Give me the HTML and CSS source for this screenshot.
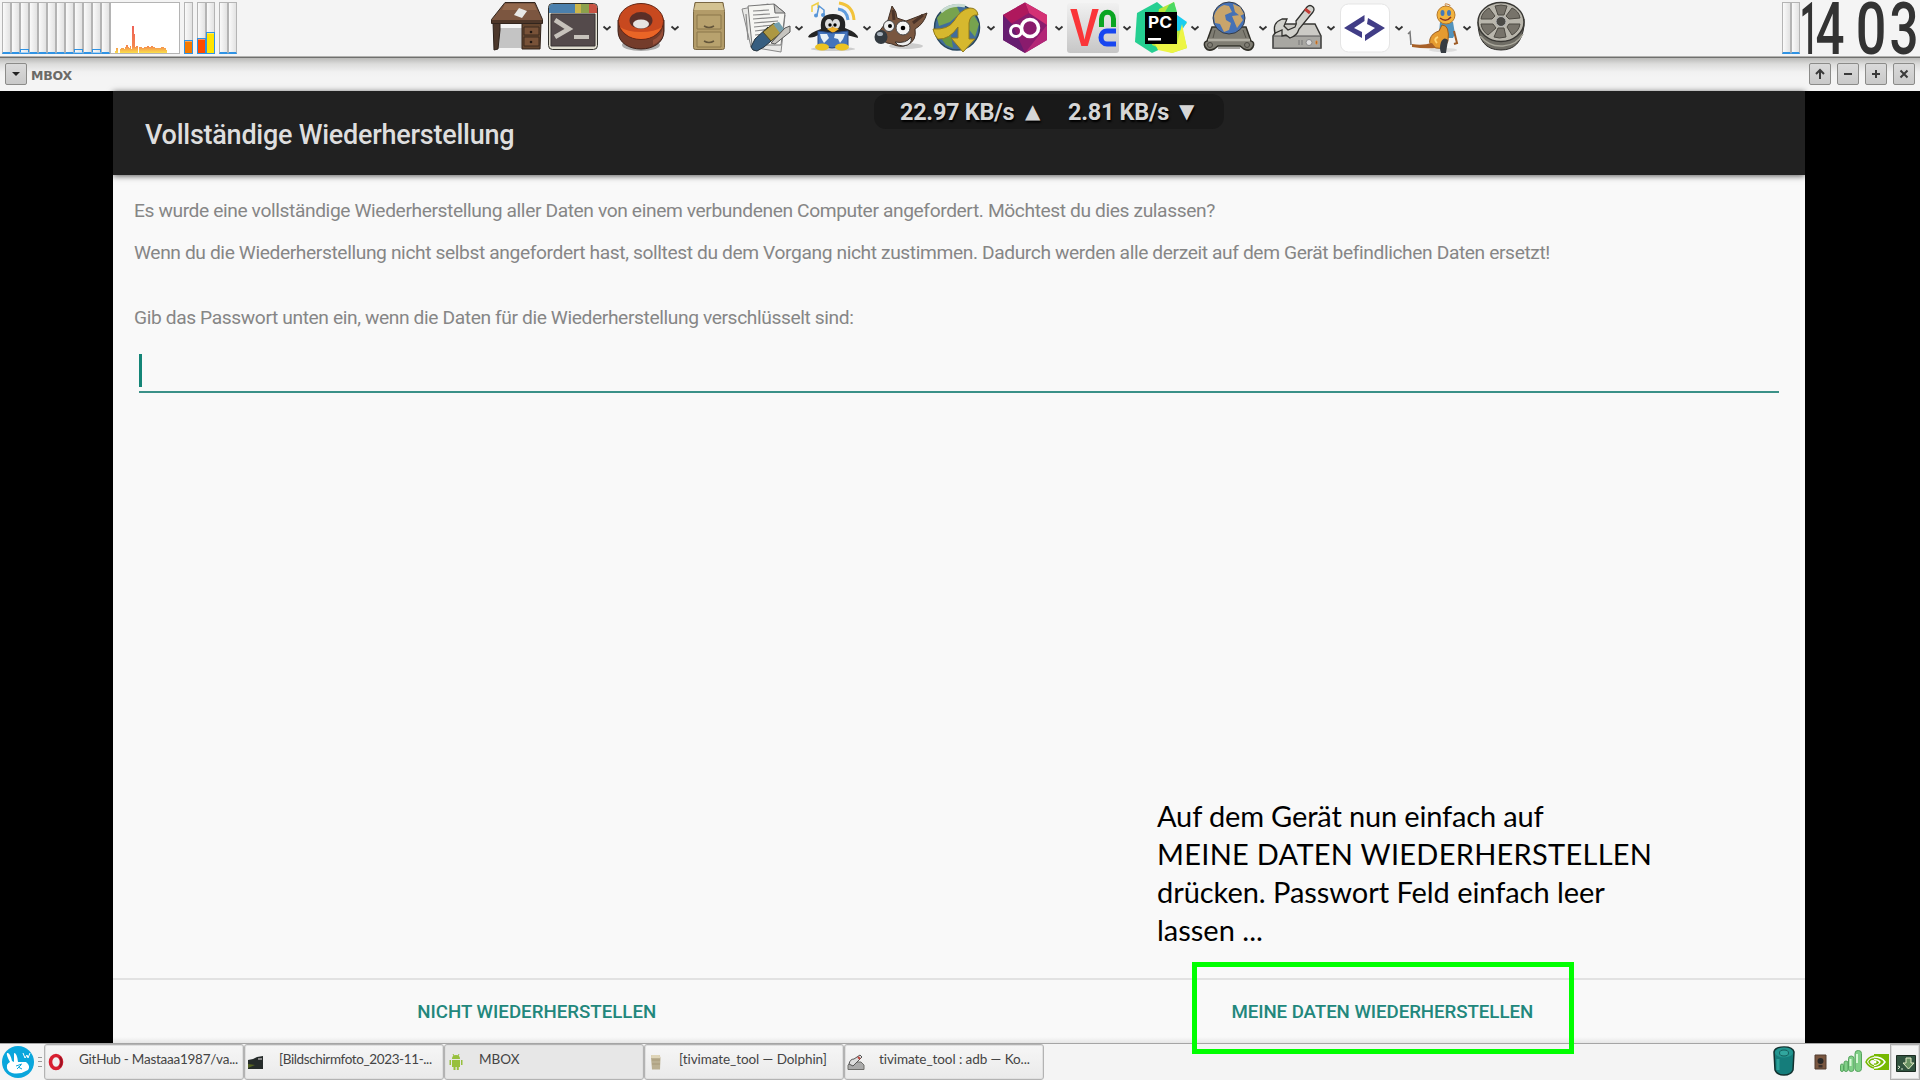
FILE: index.html
```html
<!DOCTYPE html>
<html lang="de">
<head>
<meta charset="utf-8">
<title>MBOX</title>
<link rel="stylesheet" href="styles.css">
</head>
<body>
<header class="panel">
  <div class="monitors">
    <div class="meters">
      <i class="meter"></i><i class="meter"></i><i class="meter bump"></i><i class="meter"></i><i class="meter"></i><i class="meter"></i><i class="meter"></i><i class="meter"></i><i class="meter bump"></i><i class="meter"></i><i class="meter bump"></i><i class="meter"></i>
      <svg class="graph" viewBox="0 0 70 52" width="70" height="52">
        <defs><linearGradient id="flame" x1="0" y1="24" x2="0" y2="51" gradientUnits="userSpaceOnUse"><stop offset="0" stop-color="#ee6258"/><stop offset=".75" stop-color="#f4854e"/><stop offset="1" stop-color="#fbe04a"/></linearGradient></defs>
        <rect x=".5" y=".5" width="69" height="51" fill="#fff" stroke="#b4b4b4"/>
        <path fill="url(#flame)" d="M5 51v-2h1v-3h2v5zM10 51v-4h1v-1h3v1h1v-2h1v-2h2v2h1v1h1v-2h1v3h1V24h2v8h1v13h1v-1h2v7h1v-6h3v1h2v-1h3v-1h2v1h2v-1h2v1h2v1h6v-1h3v1h2v2h1v3z"/>
      </svg>
    </div>
    <div class="meters"><i class="meter level orange"></i></div>
    <div class="meters"><i class="meter level red"></i><i class="meter level yellow"></i></div>
    <div class="meters"><i class="meter"></i><i class="meter"></i></div>
  </div>

  <nav class="launchers">
    <div class="launcher"><svg class="icon" viewBox="0 0 52 56">
      <path d="M7 28h26v20H7z" fill="#c4c4c4"/><path d="M2 22h7v8l-2 19-4 1z" fill="#4c382c" stroke="#2c211a"/>
      <path d="M31 23h19l-1 26H31z" fill="#65462f" stroke="#30231b"/><path d="M33 27h15v8H33zM33 37h15v9H33z" fill="#785238" stroke="#3d2a1e"/>
      <path d="M14 2.500h30l7.500 17v4H.5v-4z" fill="#7c5640" stroke="#32251d"/><path d="M1 20h50v3H1z" fill="#4e3729"/><path d="M14 4h29l3 6H11z" fill="#92674b"/>
      <path d="M23 15l5-7 8 3-5 7z" fill="#e8e8e6"/><circle cx="40" cy="32" r="1.300" fill="#221813"/><circle cx="40" cy="42" r="1.300" fill="#221813"/></svg></div>
    <div class="launcher"><svg class="icon" viewBox="0 0 52 56">
      <rect x="1.500" y="3.500" width="49" height="46" rx="4" fill="#e1ded0" stroke="#30302c"/>
      <path d="M2 13V8q0-4 4-4h22v9z" fill="#4b80ad"/><path d="M28 4h6v9h-6z" fill="#ccb64a"/><path d="M34 4h8v9h-8z" fill="#8ca14d"/><path d="M42 4h4q4 0 4 4v5h-8z" fill="#c75343"/>
      <path d="M4 14h44v32H4z" fill="#544a4b" stroke="#393334"/><path d="M8 20l14 9-14 8" fill="none" stroke="#c7c2bb" stroke-width="4.500"/><path d="M27 37h15" stroke="#c7c2bb" stroke-width="4"/></svg>
      <svg class="chev" viewBox="0 0 12 56"><path d="M2.500 26.500l3.500 3 3.500-3"/></svg></div>
    <div class="launcher"><svg class="icon" viewBox="0 0 52 56">
      <ellipse cx="26" cy="45" rx="19" ry="6" fill="#aaa"/><path d="M3 20v11c0 24 46 24 46 0V20z" fill="#743c2b" stroke="#40221b"/><path d="M38 40q9-4 10-13v8q-2 6-10 10z" fill="#964e38"/>
      <ellipse cx="26" cy="21.500" rx="22.500" ry="18" fill="#c8491f" stroke="#632716"/>
      <path d="M5 27q7 12 21 12t21-12q-7 5-21 5T5 27z" fill="#ea6526"/><ellipse cx="26" cy="20.500" rx="11.500" ry="8.500" fill="#5b2e27"/><ellipse cx="26" cy="24" rx="8" ry="4.500" fill="#e6e3e2"/></svg>
      <svg class="chev" viewBox="0 0 12 56"><path d="M2.500 26.500l3.500 3 3.500-3"/></svg></div>
    <div class="launcher"><svg class="icon" viewBox="0 0 52 56">
      <path d="M12 2.500h28l1.500 9v36q0 2-2 2h-27q-2 0-2-2v-36z" fill="#b39c69" stroke="#796744"/><path d="M13 3h26l2 7H11z" fill="#d3c292"/><path d="M14 15h24v14H14zM14 32h24v15H14z" fill="#b8a26e" stroke="#8a764b"/>
      <path d="M21 26q5 3 10 0M21 41q5 3 10 0" fill="none" stroke="#64563b" stroke-width="1.500"/></svg></div>
    <div class="launcher"><svg class="icon" viewBox="0 0 52 56">
      <path d="M3 9l26-5 17 11-4 37-30-5z" fill="#e7e7e5" stroke="#888"/><path d="M9 6l26-2 11 9-4 32H13z" fill="#f5f5f2" stroke="#777"/><path d="M35 4l1 9h10z" fill="#c7c7c5" stroke="#666"/>
      <path d="M14 11l16-1M14 15l17-1M14 19l26-2M15 23l24-2M15 27l20-2M16 31l16-2M16 35l10-1M7 14l2 26" stroke="#888" stroke-width="1.200"/>
      <path d="M14 50l-2-3 4-8 13-12 9 9-13 11-7 4z" fill="#375e80" stroke="#23313b"/><path d="M24 32l11-9 8 9-11 9z" fill="#ad9843" stroke="#50471f"/><path d="M34 24l6-2 5 7-4 4z" fill="#739eac"/><path d="M32 43l14-15 5-2v6L36 44z" fill="#c7c5c0" stroke="#555"/></svg>
      <svg class="chev" viewBox="0 0 12 56"><path d="M2.500 26.500l3.500 3 3.500-3"/></svg></div>
    <div class="launcher"><svg class="icon" viewBox="0 0 52 56">
      <path d="M5 12V6l6-3v5" fill="none" stroke="#f0cf43" stroke-width="1.500"/><path d="M10 15l2-9 5 4v5" fill="none" stroke="#5795d8" stroke-width="1.500"/><circle cx="9" cy="15.500" r="2" fill="#5795d8"/><circle cx="16" cy="15" r="2" fill="#5795d8"/>
      <path d="M32 3q14 2 15 17" fill="none" stroke="#f2c33b" stroke-width="3"/><path d="M31 9q9 1 10 11" fill="none" stroke="#609ddd" stroke-width="3"/>
      <ellipse cx="26" cy="49" rx="22" ry="2" fill="#ccc"/><path d="M14 29q-2-15 12-15t12 14q13 5 13 10-7-2-12-3l-3 13H14l-1-14q-8 5-12 3 1-4 13-8z" fill="#242424"/>
      <ellipse cx="22" cy="24" rx="4" ry="5" fill="#ddd"/><ellipse cx="29" cy="24" rx="4" ry="5" fill="#ddd"/><circle cx="23" cy="25" r="1.700"/><circle cx="28" cy="25" r="1.700"/><path d="M20 29l6-2 6 2-6 4z" fill="#edad27"/>
      <path d="M11 31l14 2 16-2v15l-16 2-14-2z" fill="#4474bc" stroke="#284a85"/><path d="M13 34l7 0 2 4-5 5-3-5zM28 34h10l-2 5-3 4-2-4-4-1z" fill="#e9f0f5"/><ellipse cx="15" cy="47" rx="7" ry="3.500" fill="#ecc322"/><ellipse cx="35" cy="47" rx="7" ry="3.500" fill="#ecc322"/></svg>
      <svg class="chev" viewBox="0 0 12 56"><path d="M2.500 26.500l3.500 3 3.500-3"/></svg></div>
    <div class="launcher"><svg class="icon" viewBox="0 0 52 56">
      <ellipse cx="31" cy="46" rx="17" ry="3" fill="#ccc"/><path d="M13 20l4-14q5 6 5 12l9 3 21-8q-3 11-12 16 2 12-8 16-7 3-15-1-11-1-14-11z" fill="#79563f" stroke="#413026"/><path d="M18 10l1 10M48 15l-10 8" stroke="#4b3429" stroke-width="3"/>
      <circle cx="14" cy="26" r="5.500" fill="#eee" stroke="#444"/><circle cx="28" cy="28" r="7" fill="#f4f4f4" stroke="#444"/><circle cx="15" cy="26" r="2"/><circle cx="28" cy="28" r="2.300"/>
      <ellipse cx="6" cy="37" rx="6.500" ry="7" fill="#333a40"/><ellipse cx="5" cy="34" rx="3" ry="2" fill="#a8b2bc"/><path d="M20 42q11 2 16-5 2 8-8 9-6 0-8-4z" fill="#eee" stroke="#38302b"/></svg></div>
    <div class="launcher"><svg class="icon" viewBox="0 0 52 56">
      <circle cx="26" cy="27.500" r="22.500" fill="#416d9b" stroke="#27465d" stroke-width="1.500"/><path d="M6 18l8-10 11-3 4 8-10 9-11 4zM33 9l7 1 8 14-4 13-8-10z" fill="#77a34e"/><path d="M10 38l10-3 2 13-7-3z" fill="#68963f"/><path d="M10 12q10-9 24-6" fill="none" stroke="#c7dbd1" stroke-width="3"/>
      <path d="M2 29q15 1 21-8 7-12 16-13 7 0 8 7-8-1-9 8v16h6L32 52 20 38h7V27q-9 13-20 12-4-4-5-10z" fill="#d6b82e" stroke="#927b1c"/></svg>
      <svg class="chev" viewBox="0 0 12 56"><path d="M2.500 26.500l3.500 3 3.500-3"/></svg></div>
    <div class="launcher"><svg class="icon" viewBox="0 0 52 56">
      <path d="M26 2.500l22 12.500v25L26 53 4 40V15z" fill="#8a1b6d"/><path d="M26 2.500l22 12.500v10L30 13z" fill="#d43174"/><path d="M4 15L26 2.500 30 13 10 25z" fill="#af185d"/><path d="M4 15l9 9 13 29L4 40z" fill="#671d70"/><path d="M48 25L26 53l22-13z" fill="#b32677"/>
      <circle cx="17" cy="31" r="5.500" fill="none" stroke="#fff" stroke-width="3"/><circle cx="31" cy="28" r="8.500" fill="none" stroke="#fff" stroke-width="3.500"/></svg>
      <svg class="chev" viewBox="0 0 12 56"><path d="M2.500 26.500l3.500 3 3.500-3"/></svg></div>
    <div class="launcher"><svg class="icon" viewBox="0 0 52 56">
      <defs><linearGradient id="vnc" x2="0" y2="1"><stop stop-color="#f1f1f1"/><stop offset="1" stop-color="#c6c6c6"/></linearGradient></defs><rect y="3" width="52" height="50" rx="3" fill="url(#vnc)"/>
      <text x="3" y="46" font-family="Liberation Sans" font-weight="bold" font-size="53" fill="#fa3538" textLength="29" lengthAdjust="spacingAndGlyphs">V</text>
      <path d="M34.500 27V19c0-9 12-9 12 0v8" fill="none" stroke="#0aa522" stroke-width="5"/><path d="M49 31h-9c-8 0-8 13 0 13h9" fill="none" stroke="#1746f0" stroke-width="5"/></svg>
      <svg class="chev" viewBox="0 0 12 56"><path d="M2.500 26.500l3.500 3 3.500-3"/></svg></div>
    <div class="launcher"><svg class="icon" viewBox="0 0 52 56">
      <path d="M2 13L22 2l12 10v33L17 53 0 42z" fill="#25cf91"/><path d="M24 9l15-7 3 14 10 7-5 5 5 20-15 5-20-8z" fill="#b8e83c"/><path d="M42 15l10 7-5 8-5 1z" fill="#19cdf1"/><path d="M20 44h22l5-20 5 24-15 5-14-3z" fill="#edf544"/><path d="M34 5l5-3 3 10H30z" fill="#4bd963"/>
      <path d="M10 12h32v32H10z"/><text x="13" y="28" font-family="Inter" font-weight="bold" font-size="16" fill="#fff" textLength="24" lengthAdjust="spacingAndGlyphs">PC</text><path d="M13 38h13v2.500H13z" fill="#fff"/></svg>
      <svg class="chev" viewBox="0 0 12 56"><path d="M2.500 26.500l3.500 3 3.500-3"/></svg></div>
    <div class="launcher"><svg class="icon" viewBox="0 0 52 56">
      <path d="M9 27h34l5 14q4 1 2 6-3 5-9 2l-4-3H15l-4 3q-6 3-9-2-2-5 2-6z" fill="#7f7d73" stroke="#313029" stroke-width="1.500"/><path d="M5 40h42" stroke="#aeaca1" stroke-width="2.500"/><circle cx="7" cy="45" r="2.500" fill="none" stroke="#4b4943"/><circle cx="44" cy="45" r="2.500" fill="none" stroke="#4b4943"/><path d="M12 30l-2 8M40 30l3 8M15 48h22" stroke="#55534a"/>
      <circle cx="26" cy="18" r="16" fill="#4571b5" stroke="#343b47"/><path d="M11 16q2-8 10-11l5 1 3 6-7 3 1 5 5 3-2 7-5 2-4-8-5-1zM30 4l7 3 4 7-4 2-5-4zM29 16l8-1 3 5-6 8z" fill="#c9a56b"/></svg>
      <svg class="chev" viewBox="0 0 12 56"><path d="M2.500 26.500l3.500 3 3.500-3"/></svg></div>
    <div class="launcher"><svg class="icon" viewBox="0 0 52 56">
      <path d="M10 24h34l6 12v12H2V36z" fill="#cbcac5" stroke="#383835" stroke-width="1.500"/><path d="M2.500 36h47v12h-47z" fill="#a8a7a2" stroke="#555"/><path d="M28 40v5M31 40v5" stroke="#777"/><circle cx="38" cy="42.500" r="3" fill="#ddd" stroke="#888"/><path d="M45 41h1v3h-1z" stroke="#e38633"/>
      <path d="M4 33q-3-10 7-14l5 0-3 7 4 4 7-3q2-3 1-6L36 7q3-3 6 0 2 2 0 5L28 29q-2 7-9 9l-4-3-4 1 0-6z" fill="#d1d1cc" stroke="#31312e" stroke-width="1.300"/><path d="M34 9l5 4" stroke="#c33c35" stroke-width="3"/></svg>
      <svg class="chev" viewBox="0 0 12 56"><path d="M2.500 26.500l3.500 3 3.500-3"/></svg></div>
    <div class="launcher"><svg class="icon" viewBox="0 0 52 56">
      <rect x="1.500" y="4" width="49" height="48" rx="8" fill="#fff" stroke="#e5e5e5"/><path d="M25.500 15L5 28l18 10v-6l-8-4 10.500-7zM29 18l17 10-20 13v-6l10-7-8-4z" fill="#413d86"/></svg>
      <svg class="chev" viewBox="0 0 12 56"><path d="M2.500 26.500l3.500 3 3.500-3"/></svg></div>
    <div class="launcher"><svg class="icon" viewBox="0 0 52 56">
      <ellipse cx="36" cy="50" rx="14" ry="2" fill="#ddd"/><path d="M40 7q-4-4 0-3t3 2" fill="none" stroke="#c98338"/><path d="M33 22h13l2 12-2 4h-5l-3-5h-6z" fill="#5293bd"/><path d="M35 25q8 0 6 16-3 9-12 7-8-2-6-9 2-6 9-8z" fill="#e69b30" stroke="#9a5c1d"/><path d="M25 43q-10 3-20 1v3q12 2 24 1z" fill="#a86128"/><path d="M47 31l3 12-3 1" fill="none" stroke="#9e5b25" stroke-width="2"/><path d="M1 34l2-2 1 13" fill="none" stroke="#777" stroke-width="1.500"/>
      <circle cx="39" cy="15" r="9" fill="#f2b33d" stroke="#b6782b"/><ellipse cx="35.500" cy="13" rx="2" ry="3" fill="#4479b9"/><ellipse cx="42" cy="13" rx="2" ry="3" fill="#4479b9"/><path d="M33 18q6 5 11-1" fill="none" stroke="#8c3423" stroke-width="1.500"/><path d="M31 37q-5 2-1 6" fill="none" stroke="#ffd473" stroke-width="2"/><path d="M34 42q3-6 7-2l-2 13h-5q-2-5 0-11z" fill="#363b41"/></svg>
      <svg class="chev" viewBox="0 0 12 56"><path d="M2.500 26.500l3.500 3 3.500-3"/></svg></div>
    <div class="launcher"><svg class="icon" viewBox="0 0 52 56">
      <path d="M3 22q0 28 23 28 20 0 23-24v-7z" fill="#6f6d65" stroke="#31302d"/><path d="M5 36q9 11 23 10t20-12" fill="none" stroke="#aaa89c" stroke-width="1.500"/>
      <ellipse cx="26" cy="22" rx="23" ry="19.500" fill="#b9b6ac" stroke="#393834" stroke-width="1.500"/><g fill="#77736a" stroke="#4d4a43"><path d="M20 6q6-2 12 0l-3 9h-6zM37 8q7 3 8 10l-11 1-3-3zM45 24q-1 7-8 11l-5-8 2-3zM31 37q-7 2-12 0l4-9h6zM13 35q-6-4-7-11l12 0 3 4zM6 19q1-7 8-11l6 8-3 3z"/></g><circle cx="26" cy="21.500" r="5" fill="#4b4a46" stroke="#bbb"/></svg></div>
  </nav>

  <div class="clock">
    <div class="meters"><i class="meter"></i><i class="meter"></i></div>
    <svg class="digits" viewBox="0 0 118 56" width="118" height="56"><g font-family="Roboto" font-weight="500" font-size="73" fill="#333" text-anchor="middle"><text transform="translate(7 54) scale(.45 1)">1</text><text transform="translate(28 54) scale(.7 1)">4</text><text transform="translate(69 54) scale(.74 1)">0</text><text transform="translate(102 54) scale(.7 1)">3</text></g></svg>
  </div>
</header>

<div class="titlebar">
  <span class="winbtn"><svg viewBox="0 0 22 22"><path d="M7 9h8l-4 4z" fill="#222"/></svg></span>
  <span class="wintitle">MBOX</span>
  <span class="winbtn"><svg viewBox="0 0 22 22"><path d="M11 16V8M7 11l4-4 4 4"/></svg></span>
  <span class="winbtn"><svg viewBox="0 0 22 22"><path d="M7 11h8"/></svg></span>
  <span class="winbtn"><svg viewBox="0 0 22 22"><path d="M7 11h8M11 7v8"/></svg></span>
  <span class="winbtn"><svg viewBox="0 0 22 22"><path d="M7.500 7.500l7 7M14.500 7.500l-7 7"/></svg></span>
</div>

<main class="stage">
  <section class="screen">
    <div class="appbar">
      <h1>Vollständige Wiederherstellung</h1>
      <div class="speed"><span class="up">22.97 KB/s</span><b>▲</b><span class="down">2.81 KB/s</span><b>▼</b></div>
    </div>
    <div class="body">
      <p class="p1">Es wurde eine vollständige Wiederherstellung aller Daten von einem verbundenen Computer angefordert. Möchtest du dies zulassen?</p>
      <p class="p2">Wenn du die Wiederherstellung nicht selbst angefordert hast, solltest du dem Vorgang nicht zustimmen. Dadurch werden alle derzeit auf dem Gerät befindlichen Daten ersetzt!</p>
      <p class="p3">Gib das Passwort unten ein, wenn die Daten für die Wiederherstellung verschlüsselt sind:</p>
      <div class="field"><i class="caret"></i></div>
    </div>
    <div class="actions"><button class="deny">NICHT WIEDERHERSTELLEN</button><button class="allow">MEINE DATEN WIEDERHERSTELLEN</button></div>
  </section>
</main>

<footer class="taskbar">
  <svg class="start" viewBox="0 0 32 32" width="32" height="32"><circle cx="16" cy="16" r="16" fill="#0aa6dc"/><path d="M5 7q3-1 5 8l2 1V7q3 0 4 9l8 0q5 4 2 8-8 5-16 3-6-2-5-8 1-2 3-3-4-7-3-9z" fill="#fff"/><path d="M21 7l2 5 2-3 1 3 2-5" fill="none" stroke="#fff"/><path d="M14 20l6-2M15 23l4-4M16 21l4 2" stroke="#0aa6dc"/></svg>
  <span class="grip"></span>
  <div class="task"><svg viewBox="0 0 16 16"><ellipse cx="8" cy="8" rx="5.500" ry="6.500" fill="none" stroke="#d81f31" stroke-width="3.600"/><path d="M12 3q3 5 0 10" fill="none" stroke="#9c1222" stroke-width="2"/></svg><span class="t1">GitHub - Mastaaa1987/va...</span></div>
  <div class="task"><svg viewBox="0 0 16 16"><path d="M0 6l5-1 4-2 6-1v13H0z" fill="#252b2a"/><path d="M0 10l7 1-7 3z" fill="#546222"/><path d="M10 4h4v2h-4z" fill="#888"/></svg><span class="t2">[Bildschirmfoto_2023-11-...</span></div>
  <div class="task active"><svg viewBox="0 0 16 16"><path d="M4 6h8v7H4zM4 5q0-4 4-4t4 4zM1.500 6H3v5H1.500zM13 6h1.500v5H13zM5.500 13h2v3h-2zM8.800 13h2v3h-2z" fill="#97c03d"/><path d="M5 0l1 2M11 0l-1 2" stroke="#97c03d"/></svg><span class="t3">MBOX</span></div>
  <div class="task"><svg viewBox="0 0 16 16"><path d="M3.500 1h8l1 3-.5 11.500H4L3 4z" fill="#bbb092"/><path d="M3.500 1h8l1 3H3z" fill="#dfd5b8"/><path d="M4 6h8M4 10h8" stroke="#a79979"/></svg><span class="t4">[tivimate_tool — Dolphin]</span></div>
  <div class="task"><svg viewBox="0 0 16 16"><path d="M3 8h10l3 3v4.500H0V11z" fill="#aaa" stroke="#6e6e6b"/><path d="M1 10q1-5 5-5l6-4 2 2-6 6-3 3z" fill="#ddd" stroke="#555"/><path d="M10 3l2 2" stroke="#bd443d" stroke-width="2"/></svg><span class="t5">tivimate_tool : adb — Ko...</span></div>
  <div class="tray">
    <svg class="cyl" viewBox="0 0 22 30" width="22" height="30"><path d="M1 6q1-5 10-5t10 5l-1 18q-2 5-9 5t-9-5z" fill="#157d7b" stroke="#12312f" stroke-width="1.500"/><ellipse cx="11" cy="6.500" rx="9" ry="5" fill="#239690"/><ellipse cx="11" cy="7" rx="4.500" ry="3" fill="#31a69e" stroke="#145f5c"/><path d="M5 13v11" stroke="#2ba19a" stroke-width="3"/></svg>
    <svg class="spk" viewBox="0 0 11 16" width="11" height="16"><path d="M0 1h11v14H0z" fill="#795640" stroke="#523c30"/><circle cx="5.500" cy="7" r="3" fill="#292727"/><path d="M3.500 11h4v2.500h-4z" fill="#3b302c"/></svg>
    <svg class="sig" viewBox="0 0 22 22" width="22" height="22"><g fill="#80cf87" stroke="#55a45e"><rect x=".5" y="14" width="3" height="7.500" rx="1.500"/><rect x="4" y="11" width="4" height="10.500" rx="2"/><rect x="8.500" y="6" width="5.500" height="15.500" rx="2.700"/><rect x="15" y=".5" width="6.500" height="21" rx="3"/></g><path d="M17 4v9M10.500 9v7" stroke="#d8f6d6" stroke-width="2"/></svg>
    <svg class="nv" viewBox="0 0 24 16" width="24" height="16"><path d="M9 0h15v16H9z" fill="#76b900"/><path d="M9 3q8 0 11 5-4 6-11 6" fill="none" stroke="#fff" stroke-width="1.500"/><path d="M9 2Q3 3 1 8q3 5 8 6M9 5q-4 0-5 3 2 4 7 4 3-1 5-4-3-3-7-3" fill="none" stroke="#76b900" stroke-width="1.500"/><path d="M9 5.500q4 0 6 2.500-2 3.500-6 3.500" fill="none" stroke="#fff" stroke-width="1.300"/><circle cx="10" cy="8" r="1.500" fill="#fff"/></svg>
    <span class="dl"><svg viewBox="0 0 20 17" width="20" height="17"><path d="M.5.500h19v16H.5z" fill="#31533f" stroke="#1c2c22"/><path d="M10 3h5v5h3l-5.500 6L7 8h3z" fill="#689263" stroke="#e3ecc7"/><path d="M2 11l2 1-2 2M5 14h2" fill="none" stroke="#d8e7d1"/></svg></span>
  </div>
</footer>

<div class="note"><div class="n1">Auf dem Gerät nun einfach auf</div><div class="n2">MEINE DATEN WIEDERHERSTELLEN</div><div class="n3">drücken. Passwort Feld einfach leer</div><div class="n4">lassen ...</div></div>
<div class="highlight"></div>
</body>
</html>
```
FILE: styles.css
```css
* { box-sizing: border-box; }
body { margin: 0; width: 1920px; height: 1080px; overflow: hidden; display: flex; flex-direction: column; background: #f4f4f4; font-family: Roboto, sans-serif; position: relative; }
svg { overflow: visible; }

.panel { height: 58px; flex: none; display: flex; justify-content: space-between; border-bottom: 1px solid #6f6f6d; box-shadow: inset 0 -1px #b2b2b0; padding: 0 4px 0 2px; background: #f4f4f4; }
.monitors { display: flex; gap: 4px; padding-top: 2px; width: 489px; }
.meters { display: flex; height: 52px; }
.meter { display: block; width: 9px; height: 52px; border: 1px solid #b4b4b4; border-bottom: 2px solid #2f93e4; background: linear-gradient(90deg, #fafafa, #e2e2e2); position: relative; }
.bump::after { content: ""; position: absolute; left: -1px; right: -1px; bottom: -1px; height: 2px; border: 1px solid #2f93e4; border-bottom-color: #a8d2f5; }
.level { border-bottom: 1px solid #2f93e4; }
.level::after { content: ""; position: absolute; left: -1px; right: -1px; bottom: -1px; border: 1px solid #2f93e4; box-shadow: inset 0 1px rgba(255, 255, 255, .35); }
.orange::after { height: 12px; background: #f57900; }
.red::after { height: 14px; background: #ff4b00; }
.yellow::after { height: 20px; background: #ffe400; }
.graph { display: block; }

.launchers { display: flex; flex: none; }
.launcher { display: flex; padding-right: 4px; }
.icon { width: 52px; height: 56px; display: block; }
.chev { width: 12px; height: 56px; margin-left: 2px; margin-right: -2px; display: block; }
.chev path { fill: none; stroke: #333; stroke-width: 1.8; }
.clock { margin-left: auto; display: flex; gap: 2px; }
.clock .meters { margin-top: 2px; }
.digits { display: block; margin-right: -4px; }

.titlebar { height: 33px; flex: none; display: flex; align-items: center; padding: 0 5px; gap: 6px; background: linear-gradient(#b9b9b7, #dcdcdb 6px, #f1f1f1 14px, #f4f4f4 20px); }
.winbtn { width: 22px; height: 22px; margin-bottom: 1px; border: 1px solid #8b8b89; border-radius: 2px; background: linear-gradient(#dadada, #c9c9c9); }
.winbtn svg { display: block; margin: -1px; width: 22px; height: 22px; fill: none; stroke: #3a3a3a; stroke-width: 2; }
.winbtn:first-child svg { stroke: none; }
.wintitle { flex: 1; margin-left: -2px; font: bold 12.500px "DejaVu Sans", sans-serif; letter-spacing: -.2px; color: #6b6b67; padding-top: 1px; }

.stage { height: 952px; flex: none; background: #000; padding: 0 115px 0 113px; }
.screen { height: 952px; display: flex; flex-direction: column; background: linear-gradient(#f9f9f9 946px, #e6e6e6 952px); }
.appbar { height: 84px; flex: none; background: #212121; box-shadow: 0 1px 6px rgba(0, 0, 0, .65); position: relative; padding-left: 32px; }
h1 { margin: 0; font-weight: 500; font-size: 27px; line-height: 32px; letter-spacing: -.25px; padding-top: 28px; color: #dedede; white-space: nowrap; }
.speed { position: absolute; left: 761px; top: 3px; width: 350px; height: 35px; border-radius: 12px; background: #191919; display: flex; align-items: center; padding-left: 26px; font-weight: 700; font-size: 23.500px; letter-spacing: -.3px; color: #d6d6d6; white-space: nowrap; text-shadow: 1px 2px 2px #000; }
.speed b { font: 20px/24px "DejaVu Sans", sans-serif; width: 16px; margin-top: -2px; }
.up { width: 125px; }
.down { width: 111px; }
.speed b:nth-child(2) { margin-right: 27px; }
.body { flex: 1; padding: 22px 26px 0 21px; color: #868686; font-size: 19.200px; letter-spacing: -.385px; white-space: nowrap; }
p { margin: 0; line-height: 26px; }
.p1 { padding-top: 1px; }
.p2 { margin-top: 16px; }
.p3 { margin-top: 39px; }
.field { margin: 23px 0 0 5px; height: 39px; border-bottom: 2px solid #3b9188; }
.caret { display: block; width: 3px; height: 33px; background: #148577; }
.actions { height: 65px; flex: none; border-top: 2px solid #e2e2e2; display: flex; }
button { background: none; border: 0; padding: 0; margin: 1px 0 0; font: 500 18.700px/62px Roboto, sans-serif; color: #22877c; flex: 1; text-align: center; white-space: nowrap; }
.allow, .deny { height: 62px; }
.allow { letter-spacing: -.06px; }
.deny { padding-left: 1px; }

.taskbar { height: 37px; flex: none; display: flex; border-top: 1px solid #a5a5a5; padding-left: 2px; background: #f4f4f4; }
.start { margin-top: 2px; flex: none; }
.grip { width: 4px; height: 10px; margin: 13px 2px 0 4px; border-top: 1px solid #999; border-bottom: 1px solid #999; background: linear-gradient(transparent 3px, #999 3px, #999 4px, transparent 4px); flex: none; }
.task { width: 200px; flex: none; height: 36px; border: 1px solid #b3b3b3; border-radius: 3px; display: flex; align-items: flex-start; padding: 9px 0 0 3px; background: linear-gradient(#f6f6f6, #eaeaea); box-shadow: inset 0 0 0 1px #e0e0e0; }
.active { background: #e7e7e7; }
.task svg { width: 16px; height: 16px; flex: none; }
.task span { font: 13.500px/17px Lato, sans-serif; margin-top: -3px; color: #444; white-space: nowrap; margin-left: 15px; }
.task .t1 { letter-spacing: -.25px; }
.task .t2 { letter-spacing: -.38px; }
.task .t4, .task .t5 { letter-spacing: -.07px; }
.tray { display: flex; margin-left: auto; align-items: flex-start; }
.cyl { margin: 2px 20px 0 0; }
.spk { margin: 10px 14px 0 0; }
.sig { margin: 6px 3px 0 0; }
.nv { margin: 10px 1px 0 0; }
.dl { width: 30px; height: 36px; border: 1px solid #b0b0b0; box-shadow: inset 0 0 0 1px #ddd; padding: 10px 0 0 5px; }
.dl svg { display: block; }

.note { position: absolute; left: 1157px; top: 797px; font: 29px/38px Lato, sans-serif; color: #000; white-space: nowrap; }
.note div { width: max-content; }
.n1 { letter-spacing: -.15px; }
.n2 { letter-spacing: .28px; }
.n3 { letter-spacing: -.05px; }
.highlight { position: absolute; left: 1192px; top: 962px; width: 382px; height: 92px; border: 5px solid #0f0; }
```
